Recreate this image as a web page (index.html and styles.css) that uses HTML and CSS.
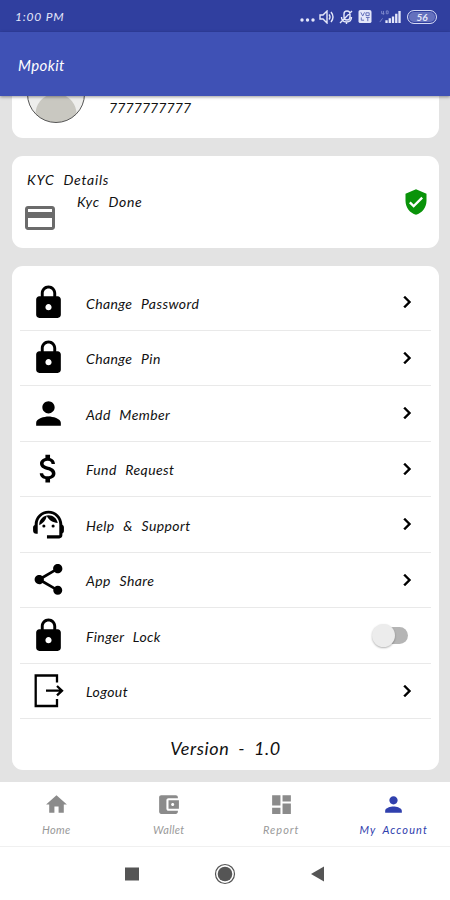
FILE: index.html
```html
<!DOCTYPE html>
<html lang="en">
<head>
  <meta charset="UTF-8">
  <meta name="viewport" content="width=device-width, initial-scale=1.0">
  <title>Mpokit</title>
  <link rel="stylesheet" href="styles.css">
</head>
<body>
  <!-- shared icons -->
  <svg class="sprite">
    <symbol id="lock" viewBox="0 0 24 24"><path d="M18 8h-1V6c0-2.76-2.24-5-5-5S7 3.24 7 6v2H6c-1.1 0-2 .9-2 2v10c0 1.100.9 2 2 2h12c1.100 0 2-.9 2-2V10c0-1.100-.9-2-2-2zm-6 9c-1.100 0-2-.9-2-2s.9-2 2-2 2 .9 2 2-.9 2-2 2zm3.100-9H8.900V6c0-1.710 1.390-3.100 3.100-3.100s3.100 1.390 3.100 3.100v2z"/></symbol>
    <symbol id="person" viewBox="0 0 24 24"><path d="M12 12c2.210 0 4-1.790 4-4s-1.790-4-4-4-4 1.790-4 4 1.790 4 4 4zm0 2c-2.670 0-8 1.340-8 4v2h16v-2c0-2.660-5.330-4-8-4z"/></symbol>
    <symbol id="chevron" viewBox="0 0 24 24"><path d="M10 6L8.590 7.410 13.170 12l-4.580 4.590L10 18l6-6z"/></symbol>
  </svg>

  <div class="statusbar">
    <span class="time">1:00 PM</span>
    <div class="status-icons">
      <svg class="st-dots" viewBox="0 0 15 4"><circle cx="2" cy="2" r="1.700"/><circle cx="7.500" cy="2" r="1.700"/><circle cx="13" cy="2" r="1.700"/></svg>
      <svg class="st-sound" viewBox="0 0 15 14"><path d="M1 5h3l4-4v12L4 9H1z"/><path d="M10 4.500q2 2.500 0 5M12 2q4 5 0 10"/></svg>
      <svg class="st-mic" viewBox="0 0 14 14"><path d="M5 7V4q0-3 3-3t3 3v3q0 3-3 3t-3-3M2.500 7q0 5 5 5t5-5M7.500 12v2M1 13L13 1"/></svg>
      <svg class="st-volte" viewBox="0 0 14 14"><rect width="14" height="14" rx="2"/><path d="M2.500 2.500l2 4 2-4M8 3h3.500v3H8zM3 8v3h3M8 8h4M10 8v4"/></svg>
      <svg class="st-signal" viewBox="0 0 24 14"><path class="faint" d="M3 1v3h3M5 1v4M8 1h2v3H8zM1 13l3-4"/><path d="M7 11h2.500v3H7zM10.500 9H13v5h-2.500zM14 7h2.500v7H14zM17.500 4H20v10h-2.500zM21 1h2.500v13H21z"/></svg>
      <span class="battery">56</span>
    </div>
  </div>

  <header class="appbar">Mpokit</header>

  <main>
    <section class="card profile">
      <div class="avatar"></div>
      <span class="phone">7777777777</span>
    </section>

    <section class="card kyc">
      <h2>KYC Details</h2>
      <div class="kyc-row">
        <svg class="kyc-card" viewBox="0 0 24 24"><path d="M20 4H4c-1.110 0-1.990.89-1.990 2L2 18c0 1.110.89 2 2 2h16c1.110 0 2-.89 2-2V6c0-1.110-.89-2-2-2zm0 14H4v-6h16v6zm0-10H4V6h16v2z"/></svg>
        <span>Kyc Done</span>
      </div>
      <svg class="shield" viewBox="0 0 24 24"><path d="M12 1L3 5v6c0 5.550 3.840 10.740 9 12 5.160-1.260 9-6.450 9-12V5l-9-4zm-2 16l-4-4 1.410-1.410L10 14.170l6.590-6.590L18 9l-8 8z"/></svg>
    </section>

    <section class="card menu">
      <ul>
        <li><svg class="icon"><use href="#lock"/></svg><span>Change Password</span><svg class="chevron"><use href="#chevron"/></svg></li>
        <li><svg class="icon"><use href="#lock"/></svg><span>Change Pin</span><svg class="chevron"><use href="#chevron"/></svg></li>
        <li><svg class="icon"><use href="#person"/></svg><span>Add Member</span><svg class="chevron"><use href="#chevron"/></svg></li>
        <li><svg class="icon" viewBox="0 0 24 24"><path d="M11.800 10.900c-2.270-.59-3-1.200-3-2.150 0-1.090 1.010-1.850 2.700-1.850 1.780 0 2.440.85 2.500 2.100h2.210c-.07-1.720-1.120-3.300-3.210-3.810V3h-3v2.160c-1.940.42-3.500 1.680-3.500 3.610 0 2.310 1.910 3.460 4.700 4.130 2.500.6 3 1.480 3 2.410 0 .69-.49 1.790-2.700 1.790-2.060 0-2.870-.92-2.980-2.100h-2.200c.12 2.190 1.760 3.420 3.680 3.830V21h3v-2.150c1.950-.37 3.500-1.500 3.500-3.550 0-2.840-2.430-3.810-4.700-4.400z"/></svg><span>Fund Request</span><svg class="chevron"><use href="#chevron"/></svg></li>
        <li><svg class="icon" viewBox="0 0 24 24"><path d="M21 12.220C21 6.730 16.740 3 12 3c-4.690 0-9 3.650-9 9.280-.6.340-1 .98-1 1.720v2c0 1.100.9 2 2 2h1v-6.100c0-3.870 3.130-7 7-7s7 3.130 7 7V19h-8v2h8c1.100 0 2-.9 2-2v-1.220c.59-.31 1-.92 1-1.640v-2.300c0-.7-.41-1.310-1-1.620z"/><circle cx="9" cy="13" r="1"/><circle cx="15" cy="13" r="1"/><path d="M18 11.030C17.520 8.180 15.040 6 12.050 6c-3.030 0-6.290 2.510-6.030 6.450 2.470-1.010 4.330-3.210 4.860-5.890 1.310 2.630 4 4.440 7.120 4.470z"/></svg><span>Help &amp; Support</span><svg class="chevron"><use href="#chevron"/></svg></li>
        <li><svg class="icon" viewBox="0 0 24 24"><path d="M18 16.080c-.76 0-1.440.3-1.960.77L8.910 12.700c.05-.23.09-.46.09-.7s-.04-.47-.09-.7l7.050-4.110c.54.5 1.250.81 2.040.81 1.660 0 3-1.340 3-3s-1.340-3-3-3-3 1.340-3 3c0 .24.04.47.09.7L8.040 9.810C7.500 9.310 6.790 9 6 9c-1.660 0-3 1.340-3 3s1.340 3 3 3c.79 0 1.500-.31 2.040-.81l7.120 4.160c-.05.21-.08.43-.08.65 0 1.610 1.310 2.920 2.920 2.920s2.920-1.310 2.920-2.920-1.310-2.920-2.920-2.920z"/></svg><span>App Share</span><svg class="chevron"><use href="#chevron"/></svg></li>
        <li><svg class="icon"><use href="#lock"/></svg><span>Finger Lock</span><div class="switch"></div></li>
        <li><svg class="icon exit" viewBox="0 0 37 37"><path d="M27 10.500V3.500H5.700v30.500H27v-7M16 18.700h15.500M27 14l5 4.700-5 4.700"/></svg><span>Logout</span><svg class="chevron"><use href="#chevron"/></svg></li>
      </ul>
      <p class="version">Version - 1.0</p>
    </section>
  </main>

  <nav class="tabs">
    <a><svg viewBox="0 0 24 24"><path d="M10 20v-6h4v6h5v-8h3L12 3 2 12h3v8z"/></svg><span>Home</span></a>
    <a><svg viewBox="0 0 24 24"><path d="M21 18v1c0 1.100-.9 2-2 2H5c-1.110 0-2-.9-2-2V5c0-1.100.89-2 2-2h14c1.100 0 2 .9 2 2v1h-9c-1.110 0-2 .9-2 2v8c0 1.100.89 2 2 2h9zm-9-2h10V8H12v8zm4-2.500c-.83 0-1.500-.67-1.500-1.500s.67-1.500 1.500-1.500 1.500.67 1.500 1.500-.67 1.500-1.500 1.500z"/></svg><span>Wallet</span></a>
    <a><svg viewBox="0 0 24 24"><path d="M3 13h8V3H3v10zm0 8h8v-6H3v6zm10 0h8V11h-8v10zm0-18v6h8V3h-8z"/></svg><span class="wide">Report</span></a>
    <a class="active"><svg><use href="#person"/></svg><span>My Account</span></a>
  </nav>

  <footer class="sysnav">
    <svg viewBox="0 0 24 24"><rect x="5" y="5.500" width="14" height="13"/></svg>
    <svg viewBox="0 0 24 24"><circle class="ring" cx="12" cy="12" r="9.500"/><circle cx="12" cy="12" r="7.300"/></svg>
    <svg viewBox="0 0 24 24"><path d="M5 12l13-7.500v15z"/></svg>
  </footer>
</body>
</html>
```
FILE: styles.css
```css
* {
  box-sizing: border-box;
}
body {
  margin: 0;
  height: 900px;
  display: flex;
  flex-direction: column;
  overflow: hidden;
  background: #fff;
  color: #111;
  font-family: Lato, "Liberation Sans", sans-serif;
  font-style: italic;
  font-size: 14px;
}
svg {
  display: block;
  fill: currentColor;
  flex: none;
}
.sprite {
  display: none;
}

/* top bars */
.statusbar {
  flex: none;
  height: 32px;
  padding: 1px 13px 0 15px;
  display: flex;
  align-items: center;
  justify-content: space-between;
  background: #303f9f;
  color: #e4e7fa;
}
.time {
  font-size: 12px;
  letter-spacing: 0.8px;
}
.status-icons {
  display: flex;
  align-items: center;
}
.st-dots {
  width: 15px;
  height: 4px;
  margin: 7px 4px 0 0;
}
.st-sound {
  width: 15px;
  height: 14px;
  margin-right: 5px;
}
.st-mic {
  width: 14px;
  height: 14px;
  margin-right: 5px;
}
.st-sound path, .st-mic path {
  fill: none;
  stroke: currentColor;
  stroke-width: 1.4;
}
.st-volte {
  width: 14px;
  height: 13px;
  margin-right: 6px;
}
.st-volte path {
  fill: none;
  stroke: #5b68b5;
}
.st-signal {
  width: 24px;
  height: 13px;
  margin-right: 5px;
}
.st-signal .faint {
  fill: none;
  stroke: #7d88cb;
}
.battery {
  width: 30px;
  height: 14px;
  border: 1.5px solid #d5d9f4;
  border-radius: 7px;
  background: #6470bd;
  box-shadow: inset 0 0 0 1px #303f9f;
  font-size: 10px;
  font-weight: bold;
  line-height: 12px;
  text-align: center;
}
.appbar {
  flex: none;
  position: relative;
  height: 64px;
  padding: 0 18px;
  line-height: 66px;
  background: #3f51b5;
  color: #fff;
  font-size: 15px;
  letter-spacing: 0.4px;
  box-shadow: 0 1px 3px rgba(0, 0, 0, 0.4);
}

/* cards */
main {
  flex: none;
  height: 686px;
  padding: 0 11px 0 12px;
  display: flex;
  flex-direction: column;
  gap: 18px;
  overflow: hidden;
  background: #e3e3e3;
}
.card {
  flex: none;
  background: #fff;
  border-radius: 11px;
}
.profile {
  height: 84px;
  margin-top: -42px;
  padding: 11px 15px 0;
  display: flex;
}
.avatar {
  width: 58px;
  height: 58px;
  border: 1px solid #555;
  border-radius: 50%;
  background: radial-gradient(circle at 50% 86%, #c9c8c1 20px, #eeeeec 21px);
}
.phone {
  margin: 34px 0 0 24px;
  font-size: 14px;
  letter-spacing: 0.1px;
}
.kyc {
  position: relative;
  height: 92px;
  padding: 15px 15px 0 11px;
}
.kyc h2 {
  margin: 0 0 0 4px;
  font-size: 14px;
  font-weight: normal;
  line-height: 18px;
  letter-spacing: 0.75px;
  word-spacing: 5px;
}
.kyc-row {
  display: flex;
  line-height: 18px;
  letter-spacing: 0.6px;
  word-spacing: 5px;
}
.kyc-row span {
  margin: 4px 0 0 19px;
}
.kyc-card {
  width: 36px;
  height: 36px;
  margin: 11px 0 0 -1px;
  color: #6b6b6b;
}
.shield {
  position: absolute;
  right: 9px;
  top: 32px;
  width: 28px;
  height: 28px;
  color: #099309;
}
.menu {
  height: 504px;
  padding: 9px 8px 0;
}
.menu ul {
  list-style: none;
  margin: 0;
  padding: 0;
}
.menu li {
  height: 55.5px;
  padding: 0 12px 0 10px;
  display: flex;
  align-items: center;
  border-bottom: 1px solid #e9e9e9;
  letter-spacing: 0.4px;
  word-spacing: 5px;
}
.menu li span {
  flex: 1;
  margin-left: 19px;
  padding-top: 2px;
}
.icon {
  width: 37px;
  height: 37px;
  color: #000;
}
.exit {
  fill: none;
  stroke: currentColor;
  stroke-width: 2.3;
}
.chevron {
  width: 24px;
  height: 24px;
  color: #000;
  stroke: currentColor;
  stroke-width: 0.4;
}
.switch {
  width: 30px;
  height: 17px;
  margin-right: 11px;
  border-radius: 9px;
  background: #b5b5b5;
}
.switch::before {
  content: "";
  display: block;
  width: 23px;
  height: 23px;
  margin: -3px 0 0 -6px;
  border-radius: 50%;
  background: #ececec;
  box-shadow: 0 1px 2px rgba(0, 0, 0, 0.3);
}
.version {
  margin: 0;
  line-height: 59px;
  text-align: center;
  font-size: 18px;
  letter-spacing: 0.6px;
  word-spacing: 4px;
}

/* bottom bars */
.tabs {
  flex: none;
  height: 65px;
  display: flex;
  background: #fff;
  border-bottom: 1px solid #f0f0f0;
}
.tabs a {
  flex: 1;
  padding-top: 10px;
  display: flex;
  flex-direction: column;
  align-items: center;
  color: #999;
  font-size: 11px;
  letter-spacing: 0.3px;
}
.tabs svg {
  width: 25px;
  height: 25px;
  margin-bottom: 6px;
  color: #8b8b8b;
}
.tabs .wide {
  letter-spacing: 1px;
}
.tabs .active, .tabs .active svg {
  color: #3040ad;
}
.tabs .active span {
  letter-spacing: 1.1px;
  word-spacing: 3px;
}
.sysnav {
  flex: 1;
  padding: 0 0 0 120px;
  display: flex;
  align-items: center;
  gap: 69px;
  color: #555;
}
.sysnav svg {
  width: 24px;
  height: 24px;
}
.ring {
  fill: none;
  stroke: currentColor;
  stroke-width: 1.2;
}
```
